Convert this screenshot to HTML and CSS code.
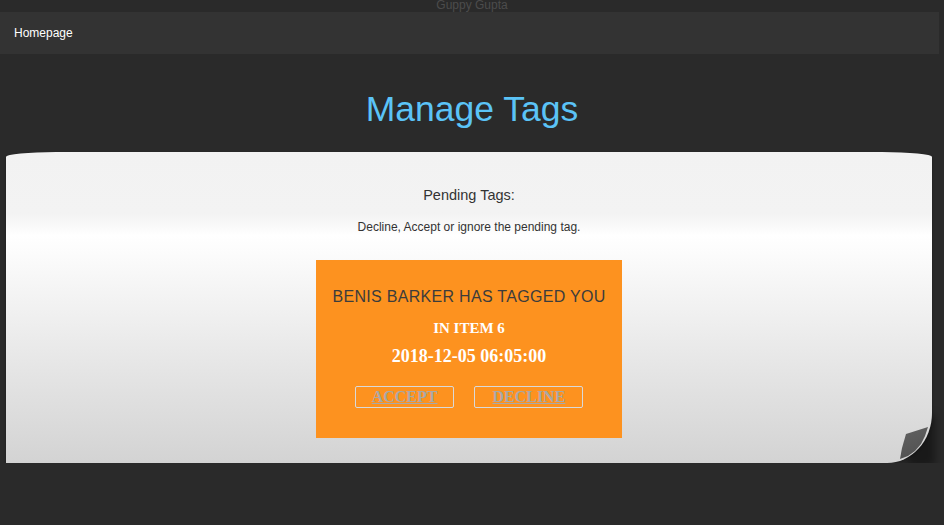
FILE: index.html
```html
<!DOCTYPE html>
<html>
<head>
<meta charset="utf-8">
<title>Manage Tags</title>
<link rel="stylesheet" href="styles.css">
</head>
<body>
  <div class="user-bar">Guppy Gupta</div>
  <nav class="navbar"><a class="nav-link" href="#">Homepage</a></nav>
  <h1 class="page-title">Manage Tags</h1>
  <section class="paper">
    <h2 class="pending-title">Pending Tags:</h2>
    <p class="pending-hint">Decline, Accept or ignore the pending tag.</p>
    <div class="tag-card">
      <h3 class="tag-who">BENIS BARKER HAS TAGGED YOU</h3>
      <div class="tag-item">IN ITEM 6</div>
      <div class="tag-date">2018-12-05 06:05:00</div>
      <div class="tag-actions">
        <a class="tag-btn" href="#">ACCEPT</a>
        <a class="tag-btn" href="#">DECLINE</a>
      </div>
    </div>
  </section>
</body>
</html>
```
FILE: styles.css
```css
html {
  background: #2a2a2a;
}
body {
  margin: 0;
  font-family: "Liberation Sans", Arial, sans-serif;
  color: #333;
}
.user-bar {
  height: 12px;
  line-height: 11px;
  font-size: 12px;
  color: #4c4c4c;
  text-align: center;
}
.navbar {
  height: 42px;
  margin-right: 5px;
  background: #333333;
  display: flex;
  align-items: center;
  padding-left: 14px;
}
.nav-link {
  color: #fff;
  font-size: 12px;
  text-decoration: none;
}
.page-title {
  margin: 35px 0 23px;
  height: 40px;
  line-height: 40px;
  font-size: 35.5px;
  font-weight: normal;
  color: #5bc3f7;
  text-align: center;
}
.paper {
  position: relative;
  margin: 0 12px 0 6px;
  height: 311px;
  box-sizing: border-box;
  padding: 33px 0 25px;
  display: flex;
  flex-direction: column;
  align-items: center;
  background: linear-gradient(to bottom, #f2f2f2 0%, #f3f3f3 20%, #ffffff 27%, #d3d3d3 100%);
  border-radius: 50px 50px 45px 0 / 5px 5px 50px 0;
  box-shadow: 0 1px 3px rgba(0, 0, 0, 0.3);
}
.paper::before {
  content: "";
  position: absolute;
  right: -3px;
  bottom: -4px;
  width: 28px;
  height: 52px;
  background: rgba(0, 0, 0, 0.4);
  filter: blur(4px);
  z-index: -1;
}
.paper::after {
  content: "";
  position: absolute;
  left: 892px;
  top: 274px;
  width: 33px;
  height: 35px;
  background: linear-gradient(160deg, #626262 0%, #565656 60%, #4a4a4a 100%);
  clip-path: polygon(8px 8px, 30px 1px, 27px 10px, 23px 18px, 17px 25px, 10px 30px, 2px 33px, 4px 22px);
}
.pending-title {
  margin: 0;
  height: 20px;
  line-height: 20px;
  font-size: 14.5px;
  font-weight: normal;
  color: #333;
}
.pending-hint {
  margin: 14px 0 25px;
  height: 16px;
  line-height: 16px;
  font-size: 12px;
  color: #333;
}
.tag-card {
  width: 306px;
  height: 178px;
  box-sizing: border-box;
  padding-top: 27px;
  background: #fd921f;
  display: flex;
  flex-direction: column;
  align-items: center;
}
.tag-who {
  margin: 0;
  height: 20px;
  line-height: 20px;
  font-size: 16px;
  font-weight: normal;
  letter-spacing: 0.3px;
  color: #3c3c3c;
}
.tag-item {
  margin-top: 11px;
  height: 20px;
  line-height: 20px;
  font-family: "Liberation Serif", "Times New Roman", serif;
  font-weight: bold;
  font-size: 15px;
  color: #fff;
}
.tag-date {
  margin-top: 7px;
  height: 22px;
  line-height: 22px;
  font-family: "Liberation Serif", "Times New Roman", serif;
  font-weight: bold;
  font-size: 18px;
  color: #fff;
}
.tag-actions {
  margin-top: 19px;
  display: flex;
  gap: 20px;
}
.tag-btn {
  display: block;
  height: 20px;
  line-height: 20px;
  padding: 0 16px;
  border: 1px solid #d9d9d9;
  border-radius: 2px;
  font-family: "Liberation Serif", "Times New Roman", serif;
  font-weight: bold;
  font-size: 16px;
  color: #a8a8a8;
  text-decoration: underline;
}
.tag-btn + .tag-btn {
  padding: 0 17px;
}
```
